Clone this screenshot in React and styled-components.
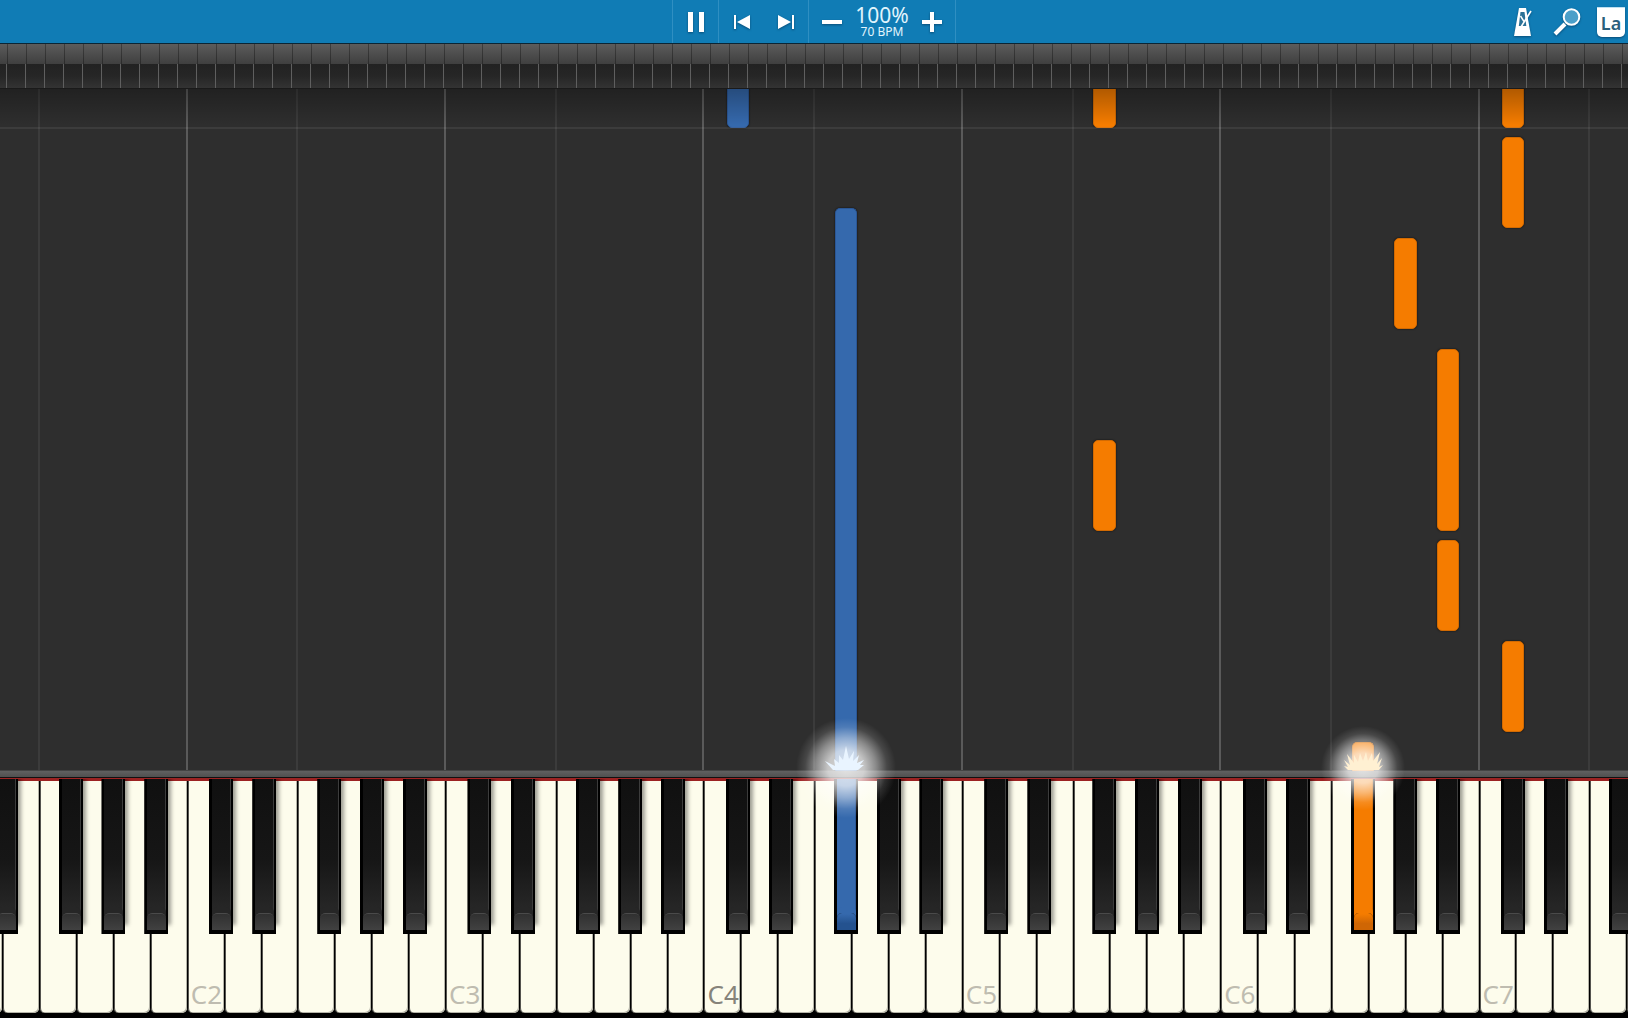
import React from "react";
import styled, { createGlobalStyle, css } from "styled-components";

const GlobalStyle = createGlobalStyle`
  *, *::before, *::after { box-sizing: border-box; }
  html, body, #root { height: 100%; }
  body {
    margin: 0;
    overflow: hidden;
    background: #000;
    font-family: "Noto Sans", "Open Sans", sans-serif;
  }
  button {
    appearance: none;
    margin: 0;
    padding: 0;
    border: 0;
    border-radius: 0;
    background: none;
    color: inherit;
    font: inherit;
    cursor: pointer;
  }
`;

/* ---------- music data ---------- */

const OCTAVES = [1, 2, 3, 4, 5, 6, 7];
const WHITE = ["C", "D", "E", "F", "G", "A", "B"];

// left edge of each black key, in percent of an octave
const BLACK = { "C#": 8.65, "D#": 25.35, "F#": 50.5, "G#": 67, "A#": 83.55 };

const HANDS = {
  left: { fill: "#3569ad", edge: "#2b5796", cap: "#24528f", spark: "#e9f4ff" },
  right: { fill: "#f57c00", edge: "#d26a02", cap: "#cf6604", spark: "#fff0d2" },
};

// start and end are distances above the keyboard
const NOTES = [
  { octave: 4, pitch: "C#", hand: "left", start: 643, end: 760 },
  { octave: 4, pitch: "F#", hand: "left", start: -4, end: 561, playing: true },
  { octave: 5, pitch: "F#", hand: "right", start: 643, end: 760 },
  { octave: 5, pitch: "F#", hand: "right", start: 240, end: 329 },
  { octave: 6, pitch: "F#", hand: "right", start: -4, end: 27, playing: true },
  { octave: 6, pitch: "G#", hand: "right", start: 442, end: 531 },
  { octave: 6, pitch: "A#", hand: "right", start: 240, end: 420 },
  { octave: 6, pitch: "A#", hand: "right", start: 140, end: 229 },
  { octave: 7, pitch: "C#", hand: "right", start: 643, end: 760 },
  { octave: 7, pitch: "C#", hand: "right", start: 543, end: 632 },
  { octave: 7, pitch: "C#", hand: "right", start: 39, end: 128 },
];

/* ---------- page ---------- */

const Page = styled.main`
  display: grid;
  grid-template-rows: 44px 45px minmax(0, 1fr) 8px 240px;
  height: 100vh;
  overflow: hidden;
`;

/* ---------- toolbar ---------- */

const Toolbar = styled.header`
  display: grid;
  grid-template-columns: 1fr auto 1fr;
  background: #107cb5;
  border-bottom: 1px solid #0b2534;
  color: #fff;
`;

const Transport = styled.div`
  grid-column: 2;
  display: flex;
  border-right: 1px solid #2f8fc2;
`;

const Group = styled.div`
  display: flex;
  align-items: stretch;
  border-left: 1px solid #2f8fc2;
`;

const ToolButton = styled.button`
  display: grid;
  place-items: center;
  width: ${(p) => p.$width}px;

  svg {
    display: block;
    filter: drop-shadow(0 1px 1px rgba(0, 30, 60, 0.5));
  }
`;

const Tempo = styled.div`
  display: flex;
  flex-direction: column;
  align-items: center;
  width: 54px;
  padding-top: 4px;
  color: #e2f5fd;
  white-space: nowrap;
`;

const Speed = styled.span`
  font-size: 21px;
  line-height: 22px;
`;

const Bpm = styled.span`
  font-size: 12px;
  line-height: 12px;
`;

const Tools = styled.div`
  grid-column: 3;
  display: flex;
  justify-content: flex-end;
  gap: 10px;
`;

const NameBadge = styled.span`
  display: grid;
  place-items: center;
  width: 28px;
  height: 30px;
  padding-top: 2px;
  border-top: 1px solid #bfe0f0;
  border-radius: 0 0 5px 5px;
  background: #fff;
  box-shadow: 0 1px 2px rgba(0, 30, 60, 0.5);
  color: #2a5f7c;
  font-size: 18px;
  font-weight: 600;
  line-height: 22px;
`;

/* ---------- song overview ---------- */

const Overview = styled.div`
  display: grid;
  grid-template-rows: 20px 1fr;
  border-bottom: 1px solid #1a1a1a;
`;

const OverviewTop = styled.div`
  background:
    repeating-linear-gradient(90deg, transparent 0 7px, rgba(0, 0, 0, 0.32) 7px 8px, transparent 8px 19px),
    linear-gradient(#5c5c5c, #3f3f3f);
`;

const OverviewBottom = styled.div`
  background:
    repeating-linear-gradient(90deg, transparent 0 6px, #5f5f5f 6px 7px, transparent 7px 19px),
    linear-gradient(#222, #262626 50%, #333);
`;

/* ---------- falling notes ---------- */

const octaveTrack = css`
  display: flex;
  & > * {
    position: relative;
    flex: 0 0 15.87%;
  }
  & > *:first-child { margin-left: -4.4%; }
`;

const Lanes = styled.section`
  ${octaveTrack}
  position: relative;
  z-index: 2;
  min-width: 0;
  background: #2e2e2e;
  clip-path: inset(0 0 -80px 0);
`;

const LaneOctave = styled.div`
  display: grid;
  grid-template-columns: 3fr 4fr;
`;

const Lane = styled.div`
  border-left: 2px solid ${(p) => (p.$strong ? "#5a5a5a" : "#3b3b3b")};
  margin-left: -1px;
  margin-right: 1px;
`;

const BarLine = styled.div`
  && {
    position: absolute;
    inset: auto 0 641px;
    height: 2px;
    background: rgba(255, 255, 255, 0.07);
  }
`;

const TopShade = styled.div`
  && {
    position: absolute;
    inset: 0 0 auto;
    height: 36px;
    background: linear-gradient(rgba(0, 0, 0, 0.28), transparent);
  }
`;

const Note = styled.div`
  position: absolute;
  width: 8.6%;
  border: 1px solid ${(p) => p.$hand.edge};
  border-radius: 5px;
  background: ${(p) => p.$hand.fill};
  box-shadow: 0 0 2px rgba(0, 0, 0, 0.8);
  ${(p) => p.$playing && css`
    border-bottom: 0;
    border-radius: 5px 5px 0 0;
    clip-path: inset(-4px -4px 4px -4px);
  `}
`;

const Burst = styled.div`
  position: absolute;
  bottom: -48px;
  width: 100px;
  height: 100px;
  margin-left: -39px;
  pointer-events: none;
  background: radial-gradient(
    circle closest-side,
    rgba(255, 255, 255, 0.82) 0,
    rgba(255, 255, 255, 0.72) 36%,
    rgba(255, 255, 255, 0.44) 60%,
    rgba(255, 255, 255, 0.12) 82%,
    transparent 100%
  );
  ${(p) => p.$small && css`
    background-size: 84px 84px;
    background-position: center;
    background-repeat: no-repeat;
  `}

  svg { display: block; margin: 28px auto 0; }
`;

/* ---------- keyboard ---------- */

const Rail = styled.div`
  border-top: 1px solid #444;
  border-bottom: 1px solid #111;
  background: linear-gradient(#606060, #505050);
`;

const Keyboard = styled.section`
  ${octaveTrack}
  border-top: 3px solid #9c2222;
  border-bottom: 5px solid #000;
  background: #000;
`;

const KeyOctave = styled.div`
  display: grid;
  grid-template-columns: repeat(7, 1fr);
`;

const WhiteKey = styled.button`
  display: flex;
  align-items: flex-end;
  padding: 0 0 3px 3px;
  border-left: 1px solid #000;
  border-radius: 0 0 5px 5px;
  background: #fdfcec;
  box-shadow: inset 1px 0 #55544f, inset -1px -1px #b5b4a8;
  color: ${(p) => (p.$middle ? "#86837a" : "#bfbcb0")};
  font-size: 26px;
  line-height: 32px;
`;

const BlackKey = styled.button`
  position: absolute;
  top: -2px;
  width: 9.29%;
  height: 155px;
  display: grid;
  grid-template-rows: 1fr 17px;
  padding: 0 2px 4px 3px;
  background: #000;
  box-shadow: ${(p) => (p.$hand ? "none" : "4px -8px 4px -1px rgba(0, 0, 0, 0.38)")};
  clip-path: inset(0 -12px 0 0);
`;

const KeyFace = styled.span`
  border-right: 1px solid ${(p) => (p.$hand ? p.$hand.edge : "#3c3c3c")};
  background: ${(p) => (p.$hand ? p.$hand.fill : "linear-gradient(#101010 0, #161616 60%, #282828 100%)")};
`;

const KeyLip = styled.span`
  border-top: 1px solid ${(p) => (p.$hand ? p.$hand.fill : "#4a4a4a")};
  border-radius: 5px 5px 0 0;
  background: ${(p) => (p.$hand ? `linear-gradient(${p.$hand.fill}, ${p.$hand.cap} 60%)` : "linear-gradient(#303030, #414141)")};
  box-shadow: 0 -6px 0 ${(p) => (p.$hand ? p.$hand.fill : "#262626")};
`;

/* ---------- icons ---------- */

const PauseIcon = () => (
  <svg width="16" height="20" viewBox="0 0 16 20" fill="#fff" aria-hidden="true">
    <rect width="5" height="20" />
    <rect x="11" width="5" height="20" />
  </svg>
);

const StepIcon = ({ forward }) => (
  <svg width="16" height="14" viewBox="0 0 16 14" fill="#fff" aria-hidden="true">
    <path d={forward ? "M0 0v14L13 7zM14 0h2v14h-2z" : "M16 0v14L3 7zM0 0h2v14H0z"} />
  </svg>
);

const MinusIcon = () => (
  <svg width="20" height="20" viewBox="0 0 20 20" fill="#fff" aria-hidden="true">
    <rect y="8" width="20" height="4" />
  </svg>
);

const PlusIcon = () => (
  <svg width="20" height="20" viewBox="0 0 20 20" fill="#fff" aria-hidden="true">
    <path d="M8 0h4v8h8v4h-8v8H8v-8H0V8h8z" />
  </svg>
);

const MetronomeIcon = () => (
  <svg width="18" height="28" viewBox="0 0 18 28" aria-hidden="true">
    <path d="M5 0h7l5 28H0z" fill="#fff" />
    <path d="M6.5 4h4l1.8 14H4.8z" fill="#2b7196" />
    <path d="M17 3 7 19" stroke="#fff" strokeWidth="1.6" />
    <path d="M6.5 8 10 13.5" stroke="#fff" strokeWidth="1.4" />
  </svg>
);

const MagnifierIcon = () => (
  <svg width="28" height="28" viewBox="0 0 28 28" aria-hidden="true">
    <path d="M12 16 2 26" stroke="#fff" strokeWidth="4" />
    <circle cx="18.5" cy="9" r="7.8" fill="#4b9fc9" stroke="#fff" strokeWidth="2" />
  </svg>
);

const SparkShape = ({ color, wide }) => (
  <svg width="42" height="24" viewBox="0 0 42 24" fill={color} aria-hidden="true">
    <path
      d={wide
        ? "M6 24 2 20l4 1-4-7 6 5-3-11 7 9 0-8 4 7 2-9 3 8 3-9 2 9 4-8 1 8 7-9-3 12 5-6-3 9 4-2-5 6z"
        : "M8 24 0 15l10 5-1-7 5 4 0-8 4 5 3-14 3 13 5-8-1 10 6-6-2 8 7-3-4 5 4 0-6 5z"}
    />
  </svg>
);

/* ---------- app ---------- */

function NoteLanes() {
  return (
    <Lanes aria-label="Falling notes">
      {OCTAVES.map((octave) => {
        const notes = NOTES.filter((n) => n.octave === octave);
        return (
          <LaneOctave key={octave}>
            <Lane $strong />
            <Lane />
            {notes.map((n) => (
              <Note
                key={n.pitch + n.start}
                $hand={HANDS[n.hand]}
                $playing={n.playing}
                style={{ left: `${BLACK[n.pitch] + 0.4}%`, bottom: n.start - 1, height: n.end - n.start + 2 }}
              />
            ))}
            {notes.filter((n) => n.playing).map((n) => (
              <Burst key={n.pitch} $small={n.hand === "right"} style={{ left: `${BLACK[n.pitch] + 0.4}%` }}>
                <SparkShape color={HANDS[n.hand].spark} wide={n.hand === "right"} />
              </Burst>
            ))}
          </LaneOctave>
        );
      })}
      <BarLine />
      <TopShade />
    </Lanes>
  );
}

function Piano() {
  return (
    <Keyboard aria-label="Keyboard">
      {OCTAVES.map((octave) => (
        <KeyOctave key={octave}>
          {WHITE.map((name) => (
            <WhiteKey key={name} aria-label={name + octave} $middle={octave === 4}>
              {name === "C" && octave > 1 && name + octave}
            </WhiteKey>
          ))}
          {Object.entries(BLACK).map(([name, left]) => {
            const note = NOTES.find((n) => n.playing && n.octave === octave && n.pitch === name);
            const hand = note && HANDS[note.hand];
            return (
              <BlackKey key={name} aria-label={name + octave} $hand={hand} style={{ left: `${left}%` }}>
                <KeyFace $hand={hand} />
                <KeyLip $hand={hand} />
              </BlackKey>
            );
          })}
        </KeyOctave>
      ))}
    </Keyboard>
  );
}

export default function App() {
  return (
    <Page>
      <GlobalStyle />
      <Toolbar>
        <Transport>
          <Group>
            <ToolButton $width={45} aria-label="Pause"><PauseIcon /></ToolButton>
          </Group>
          <Group>
            <ToolButton $width={45} aria-label="Previous bar"><StepIcon /></ToolButton>
            <ToolButton $width={44} aria-label="Next bar"><StepIcon forward /></ToolButton>
          </Group>
          <Group>
            <ToolButton $width={46} aria-label="Slower"><MinusIcon /></ToolButton>
            <Tempo>
              <Speed>100%</Speed>
              <Bpm>70 BPM</Bpm>
            </Tempo>
            <ToolButton $width={46} aria-label="Faster"><PlusIcon /></ToolButton>
          </Group>
        </Transport>
        <Tools>
          <ToolButton $width={34} aria-label="Metronome"><MetronomeIcon /></ToolButton>
          <ToolButton $width={34} aria-label="Zoom"><MagnifierIcon /></ToolButton>
          <ToolButton $width={34}><NameBadge>La</NameBadge></ToolButton>
        </Tools>
      </Toolbar>
      <Overview>
        <OverviewTop />
        <OverviewBottom />
      </Overview>
      <NoteLanes />
      <Rail />
      <Piano />
    </Page>
  );
}
